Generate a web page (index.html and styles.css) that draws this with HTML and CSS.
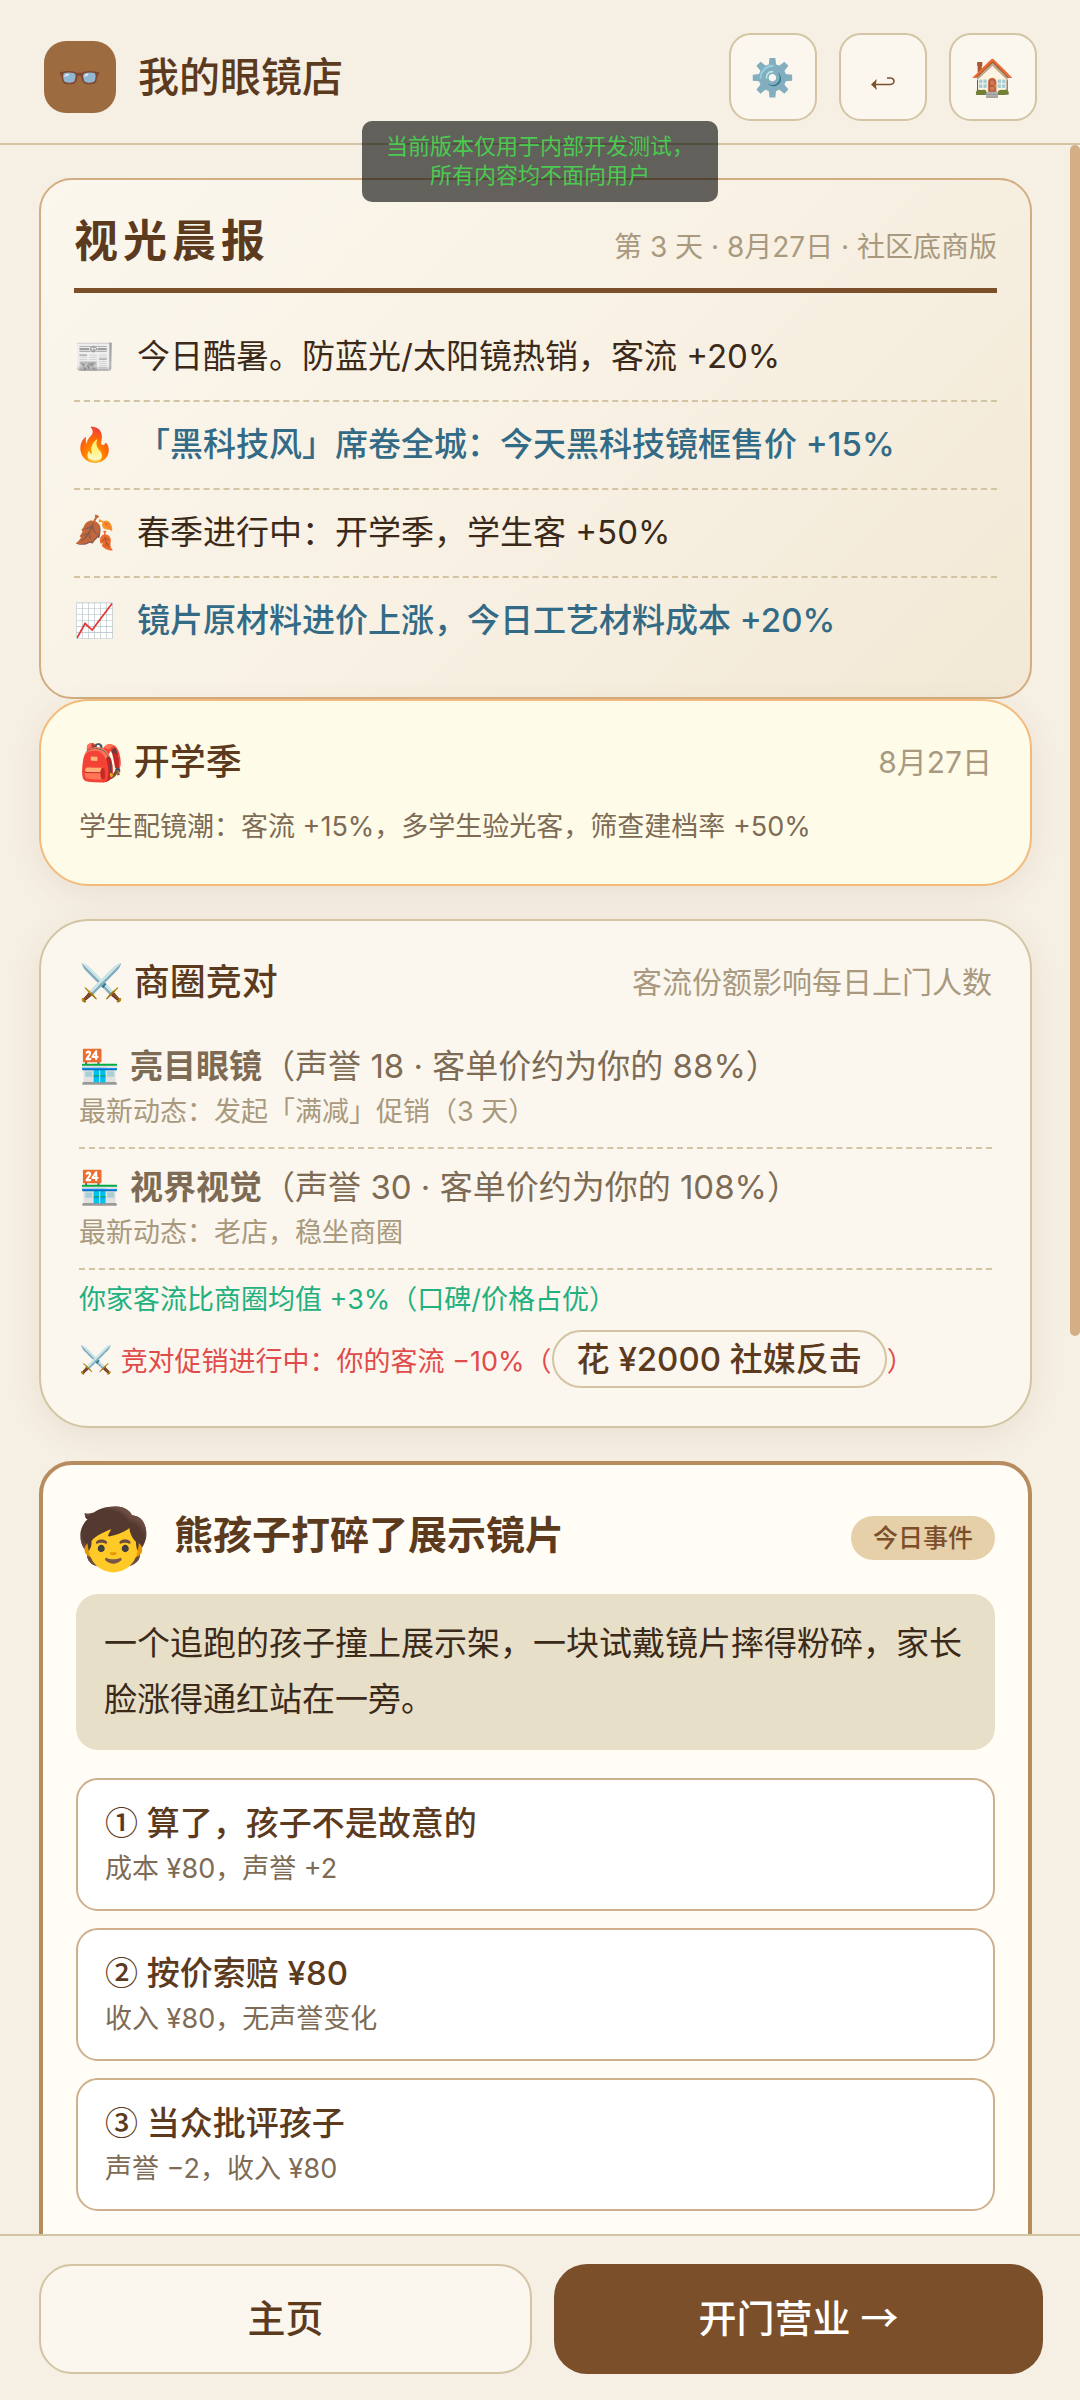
FILE: index.html
```html
<!DOCTYPE html>
<html lang="zh-CN">
<head>
<meta charset="utf-8">
<meta name="viewport" content="width=device-width, initial-scale=1">
<title>我的眼镜店</title>
<link rel="stylesheet" href="styles.css">
</head>
<body>
<header class="topbar">
  <span class="logo" aria-hidden="true">👓</span>
  <h1 class="shop-name">我的眼镜店</h1>
  <nav class="tools">
    <button class="tool" type="button" aria-label="设置">⚙️</button>
    <button class="tool" type="button" aria-label="返回">
      <svg class="back" viewBox="0 0 24 14" aria-hidden="true"><path d="M2 7.500H19Q23 7 23 4.200T19.500 1H16" fill="none" stroke="currentColor" stroke-width="1.500"/><path d="M0 7.500L5.800 2L4.800 7.500L5.800 13Z" fill="currentColor"/></svg>
    </button>
    <button class="tool" type="button" aria-label="主页">🏠</button>
  </nav>
</header>
<div class="notice" role="status">当前版本仅用于内部开发测试，<br>所有内容均不面向用户</div>

<main class="feed">
  <section class="news">
    <header class="news-head">
      <h2 class="news-title">视光晨报</h2>
      <span class="news-date">第 3 天 · 8月27日 · 社区底商版</span>
    </header>
    <ul class="news-list">
      <li class="news-item"><span class="news-icon">📰</span>今日酷暑。防蓝光/太阳镜热销，客流 +20%</li>
      <li class="news-item hot"><span class="news-icon">🔥</span>「黑科技风」席卷全城：今天黑科技镜框售价 +15%</li>
      <li class="news-item"><span class="news-icon">🍂</span>春季进行中：开学季，学生客 +50%</li>
      <li class="news-item hot"><span class="news-icon">📈</span>镜片原材料进价上涨，今日工艺材料成本 +20%</li>
    </ul>
  </section>

  <section class="card season">
    <header class="card-head">
      <h2 class="card-title"><span class="emoji">🎒</span>开学季</h2>
      <span class="card-note">8月27日</span>
    </header>
    <p class="season-text">学生配镜潮：客流 +15%，多学生验光客，筛查建档率 +50%</p>
  </section>

  <section class="card rivals">
    <header class="card-head">
      <h2 class="card-title"><span class="emoji">⚔️</span>商圈竞对</h2>
      <span class="card-note">客流份额影响每日上门人数</span>
    </header>
    <ul class="rival-list">
      <li class="rival">
        <p class="rival-name"><span class="emoji">🏪</span><strong>亮目眼镜</strong>（声誉 18 · 客单价约为你的 88%）</p>
        <p class="rival-news">最新动态：发起「满减」促销（3 天）</p>
      </li>
      <li class="rival">
        <p class="rival-name"><span class="emoji">🏪</span><strong>视界视觉</strong>（声誉 30 · 客单价约为你的 108%）</p>
        <p class="rival-news">最新动态：老店，稳坐商圈</p>
      </li>
    </ul>
    <p class="share">你家客流比商圈均值 +3%（口碑/价格占优）</p>
    <p class="promo"><span class="emoji">⚔️</span>竞对促销进行中：你的客流 −10%（<button class="counter" type="button">花 ¥2000 社媒反击</button>）</p>
  </section>

  <section class="event">
    <header class="event-head">
      <span class="face" aria-hidden="true">🧒</span>
      <h2 class="event-title">熊孩子打碎了展示镜片</h2>
      <span class="badge">今日事件</span>
    </header>
    <p class="story">一个追跑的孩子撞上展示架，一块试戴镜片摔得粉碎，家长脸涨得通红站在一旁。</p>
    <div class="choices">
      <button class="choice" type="button"><strong class="choice-name"><span class="symbol">①</span> 算了，孩子不是故意的</strong><span class="choice-cost">成本 ¥80，声誉 +2</span></button>
      <button class="choice" type="button"><strong class="choice-name"><span class="symbol">②</span> 按价索赔 ¥80</strong><span class="choice-cost">收入 ¥80，无声誉变化</span></button>
      <button class="choice" type="button"><strong class="choice-name"><span class="symbol">③</span> 当众批评孩子</strong><span class="choice-cost">声誉 −2，收入 ¥80</span></button>
    </div>
  </section>
  <span class="scroll-thumb" aria-hidden="true"></span>
</main>

<footer class="actions">
  <button class="action" type="button">主页</button>
  <button class="action primary" type="button">开门营业 <span class="symbol">→</span></button>
</footer>
</body>
</html>
```
FILE: styles.css
```css
* { box-sizing: border-box; }

body {
  margin: 0;
  height: 100vh;
  display: flex;
  flex-direction: column;
  position: relative;
  background: #f6efe3;
  color: #3b2a1a;
  font-family: Inter, "Noto Sans CJK SC", "Noto Color Emoji", sans-serif;
  font-size: 33px;
}

h1, h2, p, ul { margin: 0; padding: 0; }
ul { list-style: none; }
button { font: inherit; color: inherit; cursor: pointer; }
.symbol { font-family: "Noto Sans CJK SC", sans-serif; line-height: 1; }

.topbar {
  flex: none;
  display: flex;
  align-items: center;
  gap: 22px;
  padding: 33px 43px 22px 44px;
  border-bottom: 2px solid #d3c4a3;
}
.logo {
  width: 72px;
  height: 72px;
  border-radius: 22px;
  background: #9c6b3f;
  display: grid;
  place-items: center;
  font-size: 36px;
  line-height: 1;
}
.shop-name {
  flex: 1;
  font-size: 41px;
  font-weight: 500;
  line-height: 56px;
  color: #5c3a1e;
}
.tools { display: flex; gap: 22px; }
.tool {
  width: 88px;
  height: 88px;
  padding: 0;
  border: 2px solid #d3c4a3;
  border-radius: 22px;
  background: #fbf7ee;
  color: #7c4f2b;
  display: grid;
  place-items: center;
  font-size: 36px;
  line-height: 1;
}
.back { width: 24px; height: 14px; margin-top: 14px; }

.notice {
  position: absolute;
  z-index: 2;
  top: 121px;
  left: 50%;
  transform: translateX(-50%);
  padding: 11px 24px 12px;
  border-radius: 10px;
  background: rgba(0, 0, 0, 0.6);
  color: #4acb50;
  font-size: 22px;
  line-height: 29px;
  text-align: center;
  white-space: nowrap;
}

.feed {
  flex: 1;
  min-height: 0;
  overflow: hidden;
  position: relative;
  padding: 33px 48px 0 39px;
}
.scroll-thumb {
  position: absolute;
  top: 0;
  right: 0;
  width: 10px;
  height: 57%;
  border-radius: 5px;
  background: #d4ae85;
}

.news {
  padding: 33px;
  border: 2px solid #d2ad82;
  border-radius: 33px;
  background: linear-gradient(135deg, #fbf7ed, #f8f1e4 50%, #f2e8d5);
}
.news-head {
  display: flex;
  align-items: baseline;
  justify-content: space-between;
  padding-bottom: 18px;
  border-bottom: 5px solid #7c4f2b;
}
.news-title {
  font-size: 44px;
  font-weight: 700;
  letter-spacing: 5px;
  line-height: 57px;
  color: #5c3a1e;
}
.news-date { font-size: 28px; color: #a8997f; }
.news-list { margin-top: 21px; }
.news-item {
  display: flex;
  align-items: center;
  gap: 22px;
  padding: 17px 0 19px;
  line-height: 50px;
  border-bottom: 2px dashed #d3c4a3;
}
.news-item:last-child { border-bottom: 0; }
.news-icon { width: 41px; font-size: 33px; text-align: center; }
.hot { color: #336b87; font-weight: 500; }

.card {
  margin-bottom: 33px;
  padding: 38px;
  border: 2px solid #d3c4a3;
  border-radius: 50px;
  background: #fbf7ee;
  box-shadow: 0 8px 33px rgba(92, 58, 30, 0.08);
}
.season { border-color: #f4ba7c; background: #fffbe9; padding-bottom: 35px; }
.card-head {
  display: flex;
  align-items: center;
  justify-content: space-between;
  line-height: 46px;
}
.card-title { font-size: 36px; font-weight: 500; color: #5c3a1e; }
.card-note { font-size: 30px; color: #a8997f; }
.emoji { margin-right: 10px; }
.season-text {
  margin-top: 20px;
  font-size: 27px;
  line-height: 44px;
  color: #7d6b55;
}

.rival-list { margin-top: 23px; }
.rival { padding: 14px 0; border-bottom: 2px dashed #d3c4a3; }
.rival-name { line-height: 48px; color: #7d6b55; }
.rival-name strong { font-weight: 700; }
.rival-news { font-size: 27px; line-height: 43px; color: #a8997f; }
.share { margin-top: 8px; font-size: 27px; line-height: 44px; color: #21b07e; }
.promo {
  display: flex;
  align-items: center;
  margin-top: 8px;
  font-size: 27px;
  color: #e04b4b;
}
.promo .emoji { margin-right: 8px; }
.counter {
  padding: 4px 23px;
  border: 2px solid #d3c4a3;
  border-radius: 29px;
  background: transparent;
  color: #5c3a1e;
  font-size: 33px;
  font-weight: 500;
  line-height: 46px;
}

.event {
  padding: 33px 33px 60px;
  border: 4px solid #b78d5f;
  border-radius: 33px;
  background: #fffdf5;
}
.event-head { display: flex; align-items: center; gap: 22px; }
.face { width: 76px; font-size: 60px; line-height: 80px; text-align: center; }
.event-title {
  flex: 1;
  padding-bottom: 6px;
  font-size: 39px;
  font-weight: 700;
  line-height: 50px;
  color: #5c3a1e;
}
.badge {
  padding: 0 22px;
  border-radius: 22px;
  background: #e6d0a9;
  color: #7c4f2b;
  font-size: 25px;
  font-weight: 500;
  line-height: 44px;
}
.story {
  margin-top: 16px;
  padding: 21px 28px 23px;
  border-radius: 22px;
  background: #e8dfc8;
  line-height: 56px;
}
.choices {
  display: flex;
  flex-direction: column;
  gap: 17px;
  margin-top: 28px;
}
.choice {
  display: flex;
  flex-direction: column;
  padding: 20px 27px 17px;
  border: 2px solid #cfb08e;
  border-radius: 22px;
  background: #fff;
  text-align: left;
}
.choice-name { font-weight: 500; line-height: 46px; color: #5c3a1e; }
.choice-cost { font-size: 27px; line-height: 46px; color: #7d6b55; }

.actions {
  flex: none;
  display: flex;
  gap: 22px;
  padding: 28px 37px 26px 39px;
  border-top: 2px solid #d3c4a3;
}
.action {
  flex: 1;
  padding: 24px 0 26px;
  border: 2px solid #d3c4a3;
  border-radius: 33px;
  background: #fbf7ee;
  color: #5c3a1e;
  font-size: 38px;
  font-weight: 500;
  line-height: 56px;
}
.primary { border: 0; background: #7c4f2b; color: #fff; }
```
